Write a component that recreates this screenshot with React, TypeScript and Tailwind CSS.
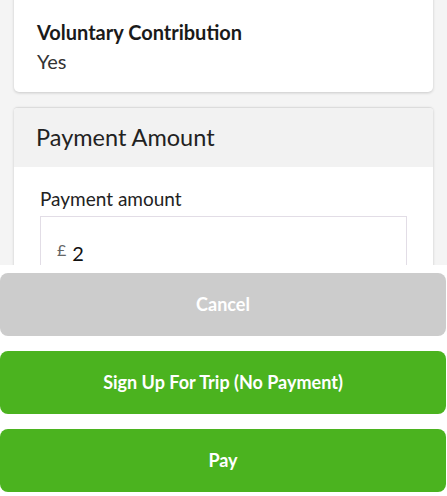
export default function App() {
  return (
    <div className="flex h-[496px] w-[447px] flex-col overflow-hidden bg-[#f4f4f4] font-['Lato',sans-serif] text-[#1a1a1a]">
      <div className="h-[265px] shrink-0 overflow-hidden px-[14px]">
        {/* card scrolled partly above the viewport */}
        <div className="-mt-[10px] rounded-[5px] bg-white px-[23px] pt-[29px] pb-[17px] shadow-[0_1px_3px_rgba(0,0,0,0.18)]">
          <div className="text-[20px] font-bold leading-[27px]">Voluntary Contribution</div>
          <div className="mt-[2px] text-[20px] leading-[27px] text-[#333]">Yes</div>
        </div>

        <div className="mt-[15px] overflow-hidden rounded-t-[4px] border-t border-[#dcdcdc] bg-white shadow-[0_1px_3px_rgba(0,0,0,0.18)]">
          <div className="flex h-[59px] items-center bg-[#f2f2f2] px-[22px] text-[23.5px] text-[#222]">
            Payment Amount
          </div>
          <div className="px-[26px] pt-[18px] pb-[20px]">
            <div className="text-[19px] leading-[27px] text-[#222]">Payment amount</div>
            <div className="mt-[4px] flex h-[70px] items-start border border-[#e2dde6] px-[16px] pt-[22px]">
              <span className="mt-[1px] text-[16px] leading-[20px] text-[#666]">£</span>
              <span className="ml-[6px] mt-[6px] text-[20px] leading-[16px] text-[#111]">2</span>
            </div>
          </div>
        </div>
      </div>

      <div className="flex flex-1 flex-col gap-[15px] bg-white pt-[8px]">
        <button className="h-[63px] w-[446px] rounded-[8px] bg-[#cccccc] text-[18px] font-bold text-white">
          Cancel
        </button>
        <button className="h-[63px] w-[446px] rounded-[8px] bg-[#4bb31f] text-[18px] font-bold text-white">
          Sign Up For Trip (No Payment)
        </button>
        <button className="h-[63px] w-[446px] rounded-[8px] bg-[#4bb31f] text-[18px] font-bold text-white">
          Pay
        </button>
      </div>
    </div>
  );
}
